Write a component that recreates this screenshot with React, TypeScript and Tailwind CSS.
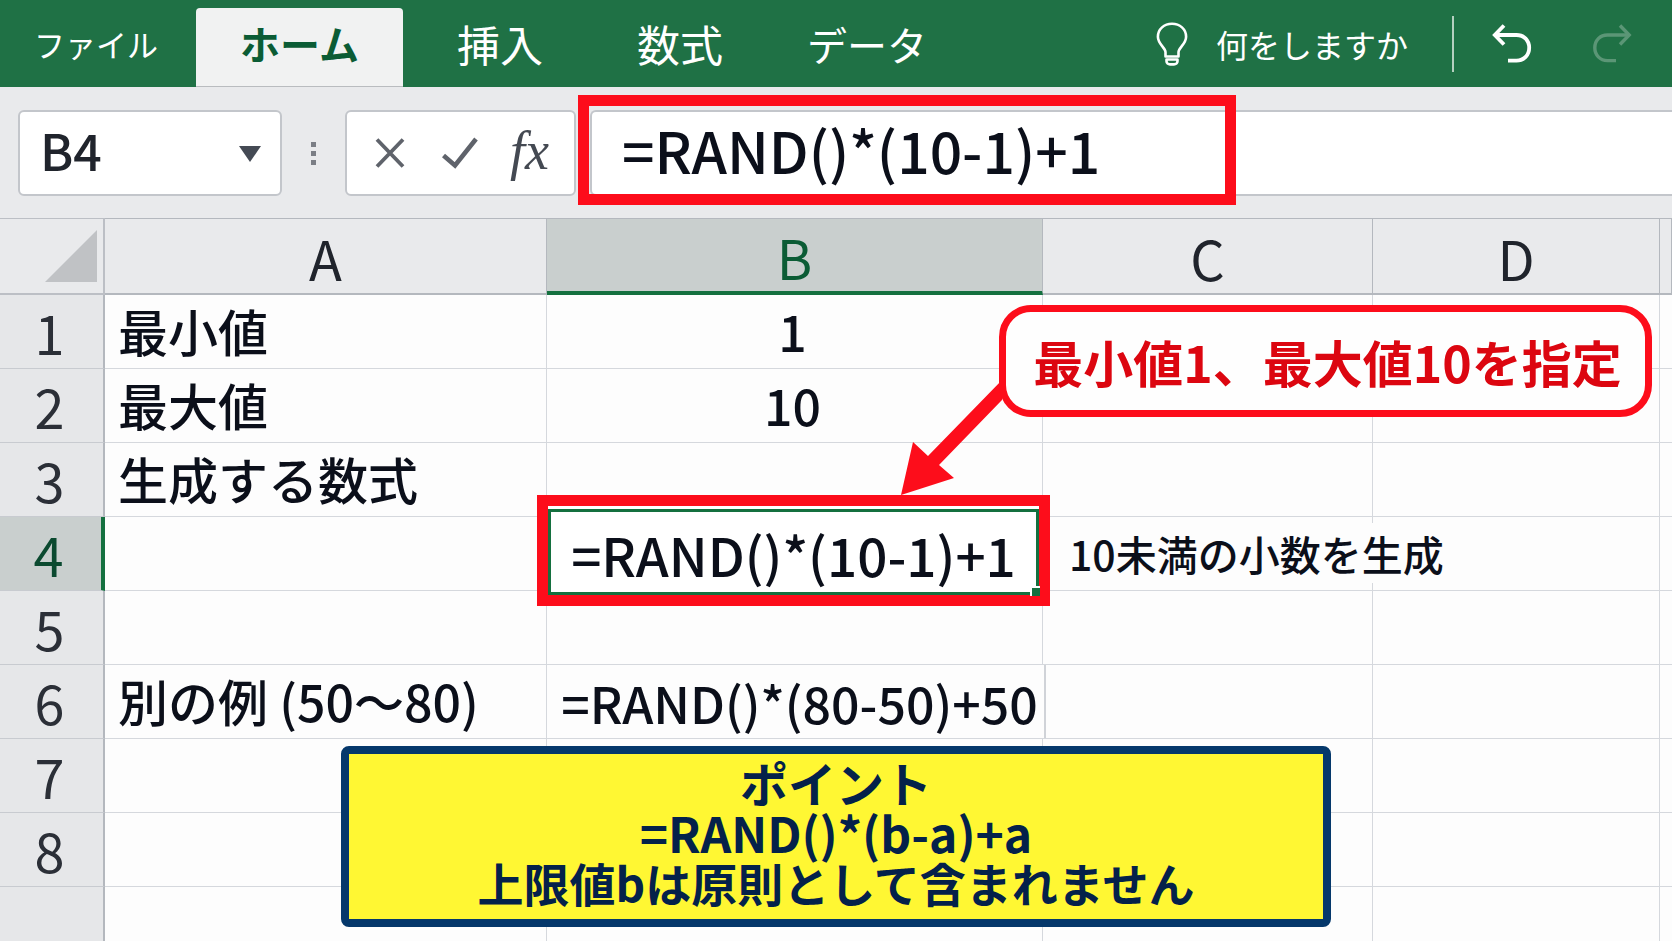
import { useState } from 'react'
import type { ReactNode } from 'react'
import clsx from 'clsx'

const tabs = [
  { name: 'ファイル', className: 'w-[196px] pr-1 text-[31px]' },
  { name: 'ホーム', className: 'w-[207px] text-[40px]' },
  { name: '挿入', className: 'w-[194px] text-[43px]' },
  { name: '数式', className: 'w-[166px] text-[43px]' },
  { name: 'データ', className: 'w-[208px] text-[40px]' },
]

const columns = ['A', 'B', 'C', 'D', '']

const rows: { id: string; a?: string; b?: string; c?: string }[] = [
  { id: '1', a: '最小値', b: '1' },
  { id: '2', a: '最大値', b: '10' },
  { id: '3', a: '生成する数式' },
  { id: '4', b: '=RAND()*(10-1)+1', c: '10未満の小数を生成' },
  { id: '5' },
  { id: '6', a: '別の例 (50〜80)', b: '=RAND()*(80-50)+50' },
  { id: '7' },
  { id: '8' },
]

function Ribbon() {
  const [active, setActive] = useState('ホーム')

  return (
    <header className="flex h-[87px] justify-between bg-[#1f7145] text-white">
      <nav className="flex items-end">
        {tabs.map((tab) => (
          <button
            key={tab.name}
            onClick={() => setActive(tab.name)}
            className={clsx(
              'h-[79px] whitespace-nowrap pb-2 leading-none',
              tab.className,
              active === tab.name && 'rounded-t border-b border-[#b9bcbf] bg-[#f1f2f2] font-bold text-[#0b5c35]'
            )}
          >
            {tab.name}
          </button>
        ))}
      </nav>

      <div className="flex items-center pr-10">
        <button className="flex items-center gap-7 text-[32px]">
          <svg width="32" height="44" viewBox="0 0 32 44" fill="none" stroke="currentColor" strokeWidth="2.6" strokeLinejoin="round">
            <path d="M9.5 34.5v-4.2c0-4.6-7.6-8.2-7.6-15.6C1.9 7 8.2 1.8 16 1.8S30.1 7 30.1 14.7c0 7.4-7.6 11-7.6 15.6v4.2z" />
            <path d="M10.5 37.5h11v1.7c0 2-1.7 3.2-3.5 3.2h-4c-1.8 0-3.5-1.2-3.5-3.2z" />
          </svg>
          何をしますか
        </button>
        <div className="ml-11 h-14 w-0.5 bg-[#b5d0c0]" />
        <button aria-label="元に戻す" className="ml-[38px]">
          <svg width="40" height="40" viewBox="0 0 40 40" fill="none" stroke="currentColor" strokeWidth="3.8">
            <path d="M12 1.5 2.8 11l9.2 9.5" />
            <path d="M2.8 11h21.7c7.5 0 12.7 5.5 12.7 12.8 0 7.2-5.2 12.8-12.7 12.8H16" />
          </svg>
        </button>
        <button aria-label="やり直し" disabled className="ml-[60px] text-[#5b9676]">
          <svg width="40" height="40" viewBox="0 0 40 40" fill="none" stroke="currentColor" strokeWidth="3.4">
            <path d="m28 1.5 9.2 9.500L28 20.500" />
            <path d="M37.2 11H15.500C8 11 2.800 16.500 2.800 23.800c0 7.200 5.200 12.800 12.700 12.800H24" />
          </svg>
        </button>
      </div>
    </header>
  )
}

function FormulaBar() {
  const [formula, setFormula] = useState('=RAND()*(10-1)+1')

  return (
    <div className="flex h-[131px] items-center bg-[#e9eaec] pb-2 pl-[18px] pt-[9px]">
      <div className="relative">
        <select
          aria-label="名前ボックス"
          className="h-[86px] w-[264px] appearance-none rounded-md border-2 border-[#c3c6cb] bg-white pb-2 pl-5 text-[50px] font-medium leading-none text-[#20242c]"
        >
          <option>B4</option>
        </select>
        <svg className="pointer-events-none absolute right-5 top-9" width="24" height="16" viewBox="0 0 24 16" fill="#444a54">
          <path d="M1 0h22L12 16z" />
        </svg>
      </div>

      <div className="mx-[29px] flex w-[5px] flex-col gap-1">
        <span className="size-[5px] bg-[#7b7e85]" />
        <span className="size-[5px] bg-[#7b7e85]" />
        <span className="size-[5px] bg-[#7b7e85]" />
      </div>

      <div className="flex h-[86px] w-[231px] items-center rounded-md border-2 border-[#c3c6cb] bg-white pl-7 text-[#5f636b]">
        <button aria-label="キャンセル">
          <svg width="30" height="30" viewBox="0 0 30 30" fill="none" stroke="currentColor" strokeWidth="3.8">
            <path d="M2 1.5 28 28.5M28 1.5 2 28.5" />
          </svg>
        </button>
        <button aria-label="入力" className="ml-[37px]">
          <svg width="36" height="32" viewBox="0 0 36 32" fill="none" stroke="currentColor" strokeWidth="4.6">
            <path d="M1.5 18.5 13 28.5 34 2" />
          </svg>
        </button>
        <button aria-label="関数の挿入" className="ml-8 pb-1 font-[Liberation_Serif,serif] text-[54px] italic leading-none text-[#444952]">
          fx
        </button>
      </div>

      <div className="relative ml-3.5 flex-1">
        <input
          aria-label="数式バー"
          value={formula}
          onChange={(e) => setFormula(e.target.value)}
          className="block h-[86px] w-full rounded-l-md border-2 border-r-0 border-[#c3c6cb] bg-white pb-2 pl-[30px] text-[57px] font-medium leading-none text-[#0b0f1a] outline-none"
        />
        <div className="pointer-events-none absolute -left-3 -top-[15px] h-[110px] w-[658px] border-[11px] border-[#fd0d1b]" />
      </div>
    </div>
  )
}

function ActiveCell({ children }: { children: ReactNode }) {
  return (
    <div className="absolute -bottom-4 -left-2.5 -right-2 -top-[22px] z-10 border-[11px] border-[#fd0d1b] bg-white pt-[3px]">
      <div className="relative flex h-full items-center justify-center border-[3px] border-[#14703f] pt-1 text-[53px]">
        {children}
        <span className="absolute -bottom-1 -right-1 size-2.5 border-l-2 border-t-2 border-white bg-[#14703f]" />
      </div>
    </div>
  )
}

function Sheet() {
  return (
    <table className="w-full table-fixed border-separate border-spacing-0 whitespace-nowrap leading-none text-[#0b0f1a]">
      <colgroup>
        <col className="w-[105px]" />
        <col className="w-[442px]" />
        <col className="w-[496px]" />
        <col className="w-[330px]" />
        <col className="w-[287px]" />
        <col />
      </colgroup>
      <thead>
        <tr className="h-[77px] bg-[#e9eaec] text-[54px] text-[#20242c]">
          <th className="border-b-2 border-r-2 border-t border-[#bcbfc5] p-0">
            <svg className="ml-[45px]" width="52" height="52" viewBox="0 0 52 52" fill="#c0c2c5">
              <path d="M52 0v52H0z" />
            </svg>
          </th>
          {columns.map((column) => (
            <th
              key={column}
              className={clsx(
                'border-r border-t border-[#b4b8be] p-0 pt-1 font-normal',
                column === 'B' ? 'border-b-4 border-b-[#14703f] bg-[#c9cfce] font-medium text-[#0b5c35]' : 'border-b-2'
              )}
            >
              {column}
            </th>
          ))}
        </tr>
      </thead>
      <tbody>
        {rows.map((row) => (
          <tr key={row.id} className="h-[74px] bg-[#fdfdfd] text-[50px] font-medium">
            <th
              className={clsx(
                'border-b border-[#c8cbd0] p-0 pr-1 text-[54px] font-normal',
                row.id === '4'
                  ? 'border-r-4 border-r-[#14703f] bg-[#c9cfce] text-[#0b4a30]'
                  : 'border-r-2 border-r-[#b4b8be] bg-[#e6e7e9] text-[#2b2f37]'
              )}
            >
              {row.id}
            </th>
            <td className="border-b border-r border-[#d5d8dd] p-0 pb-1 pl-[13px]">{row.a}</td>
            <td className="relative border-b border-r border-[#d5d8dd] p-0 pb-1 pr-1 text-center">
              {row.id === '4' && <ActiveCell>{row.b}</ActiveCell>}
              {row.id === '6' && (
                <div className="absolute -right-1 bottom-0 left-0 top-0 flex items-center justify-center border-r-2 border-[#d0d3d8] bg-[#fdfdfd] pl-2">
                  {row.b}
                </div>
              )}
              {row.id !== '4' && row.id !== '6' && row.b}
            </td>
            <td className="border-b border-r border-[#d5d8dd] p-0 pl-[26px] text-[41px]">
              {row.c && <span className="relative bg-[#fdfdfd]">{row.c}</span>}
            </td>
            <td className="border-b border-r border-[#d5d8dd] p-0" />
            <td className="border-b border-[#d5d8dd] p-0" />
          </tr>
        ))}
        <tr className="h-[54px] bg-[#fdfdfd]">
          <th className="border-r-2 border-[#b4b8be] bg-[#e6e7e9] p-0" />
          <td className="border-r border-[#d5d8dd]" />
          <td className="border-r border-[#d5d8dd]" />
          <td className="border-r border-[#d5d8dd]" />
          <td className="border-r border-[#d5d8dd]" />
          <td />
        </tr>
      </tbody>
    </table>
  )
}

export default function App() {
  return (
    <div className="min-h-screen overflow-hidden bg-[#fdfdfd] font-['Noto_Sans_CJK_JP',sans-serif]">
      <Ribbon />
      <FormulaBar />
      <main className="relative">
        <Sheet />

        <svg className="absolute left-[900px] top-[150px] z-20" width="112" height="128" viewBox="0 0 112 128" fill="#fd0d1b">
          <path d="M1 127 13 74l15 14L102 12v20L39 97l15 13z" />
        </svg>
        <div className="absolute left-[999px] top-[87px] z-20 flex h-[112px] w-[653px] items-center justify-center whitespace-nowrap rounded-[32px] border-[7px] border-[#fd0d1b] bg-[#fefefe] pl-1 text-[50px] font-bold leading-none text-[#dc0610]">
          最小値1、最大値10を指定
        </div>

        <div className="absolute left-1/2 top-[528px] z-20 flex h-[181px] w-[990px] -translate-x-1/2 flex-col items-center justify-center whitespace-nowrap rounded-lg border-8 border-[#05386b] bg-[#fff733] pb-2.5 text-[48px] font-bold leading-[50px] text-[#04214a]">
          <p>ポイント</p>
          <p>=RAND()*(b-a)+a</p>
          <p className="text-[46px]">上限値bは原則として含まれません</p>
        </div>
      </main>
    </div>
  )
}
